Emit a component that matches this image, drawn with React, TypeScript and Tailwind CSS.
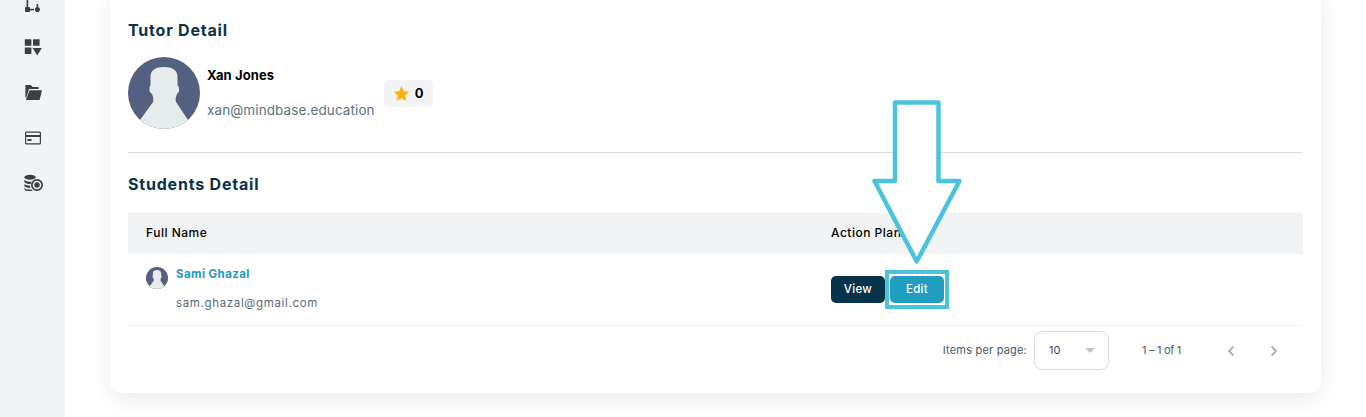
function Avatar({ size }: { size: string }) {
  return (
    <svg className={size} viewBox="0 0 72 72">
      <defs>
        <clipPath id="avatar-clip">
          <circle cx="36" cy="36" r="36" />
        </clipPath>
      </defs>
      <g clipPath="url(#avatar-clip)">
        <rect width="72" height="72" fill="#54607f" />
        <path
          d="M22.500 20c0-7 5-10 13.500-10s13.500 3 13.500 10v8l1.500 2.500v4l-2 2.500c-1 3-2 5-1 8l12 18 11 9H1l11-9 13-18c1-3 0-5-1-8l-2.500-2.500v-4l1-2.500z"
          fill="#e6ebeb"
        />
      </g>
    </svg>
  );
}

function SideIcon({ children }: { children: React.ReactNode }) {
  return (
    <div className="flex h-[45.3px] items-center justify-center">
      <svg className="h-5 w-5 text-[#3b3f44]" viewBox="0 0 20 20" fill="currentColor">
        {children}
      </svg>
    </div>
  );
}

function Sidebar() {
  return (
    <aside className="-mt-[21px] flex w-[65px] shrink-0 flex-col bg-[#f1f3f5]">
      <SideIcon>
        <rect x="3.600" y="0" width="1.600" height="17" />
        <rect x="2" y="15" width="5" height="5" rx="1" />
        <rect x="6" y="16.800" width="5" height="1.600" />
        <rect x="13.600" y="12" width="1.600" height="8" />
        <circle cx="14.400" cy="17.600" r="2.500" />
      </SideIcon>
      <SideIcon>
        <rect x="1.800" y="2.200" width="6.600" height="6.600" rx="0.600" />
        <rect x="10" y="2.200" width="6.600" height="6.600" rx="0.600" />
        <rect x="1.800" y="10.400" width="6.600" height="6.600" rx="0.600" />
        <path d="M9.600 11h9.200l-4.600 7.400z" />
      </SideIcon>
      <SideIcon>
        <path d="M2.400 3h5.400l1.700 2h6v2H6L3.400 15.500H2.400z" />
        <path d="M6.600 8.200h12.400L16.600 18H2.800z" />
      </SideIcon>
      <SideIcon>
        <path
          fillRule="evenodd"
          d="M3.500 3.500h13a1.500 1.500 0 0 1 1.500 1.500v10a1.500 1.500 0 0 1-1.500 1.500h-13A1.500 1.500 0 0 1 2 15V5a1.500 1.500 0 0 1 1.500-1.500zm0 1.200a.3.300 0 0 0-.3.300v2h13.600V5a.3.300 0 0 0-.3-.3zM3.200 9v6a.3.300 0 0 0 .3.300h13a.3.300 0 0 0 .3-.3V9z"
        />
        <rect x="4.500" y="11" width="4" height="2" />
      </SideIcon>
      <SideIcon>
        <ellipse cx="7" cy="4.300" rx="5.600" ry="2.500" />
        <path d="M1.400 6.800c1 1.300 3 2 5.600 2 .8 0 1.500-.1 2.200-.2A7 7 0 0 0 7.400 11H7c-2.400 0-4.500-.6-5.600-1.800z" />
        <path d="M1.400 11c1.100 1.100 3.200 1.700 5.600 1.700h.1c0 .8.200 1.500.5 2.200H7c-2.400 0-4.500-.6-5.600-1.700z" />
        <path d="M1.400 15c1.100 1.100 3.200 1.600 5.600 1.600h1.600l1 1.300c-.8.200-1.700.2-2.600.2-3 0-5.600-1-5.600-2.200z" />
        <path
          fillRule="evenodd"
          d="M14 6a6 6 0 1 1 0 12 6 6 0 0 1 0-12zm0 1.700a4.300 4.300 0 1 0 0 8.600 4.300 4.300 0 0 0 0-8.600z"
        />
        <circle cx="14" cy="12" r="2.700" />
      </SideIcon>
    </aside>
  );
}

function Pagination() {
  return (
    <div className="flex h-[49px] items-center justify-end pr-[17px] text-[11px] text-[#4c5a62]">
      <span className="tracking-[0.2px]">Items per page:</span>
      <div className="ml-[7px] flex h-[39px] w-[75px] items-center justify-between rounded-[8px] border border-[#dcdcdc] pl-[14px] pr-[13px] text-[#3f4d55]">
        <span>10</span>
        <span className="h-0 w-0 border-x-[5px] border-t-[5px] border-x-transparent border-t-[#c4c4c4]" />
      </div>
      <span className="ml-[33px] w-[40px] whitespace-nowrap tracking-[-0.3px]">1 – 1 of 1</span>
      <svg className="ml-[37px] h-6 w-6 text-[#b2b2b2]" viewBox="0 0 24 24" fill="none" stroke="currentColor" strokeWidth="2">
        <path d="M14.500 7.500 10 12l4.500 4.500" />
      </svg>
      <svg className="ml-[19px] h-6 w-6 text-[#b2b2b2]" viewBox="0 0 24 24" fill="none" stroke="currentColor" strokeWidth="2">
        <path d="M9.500 7.500 14 12l-4.500 4.500" />
      </svg>
    </div>
  );
}

export default function App() {
  return (
    <div className="relative flex h-[417px] w-[1366px] overflow-hidden bg-white font-['Inter','Liberation_Sans',sans-serif]">
      <Sidebar />
      <main className="min-w-0 flex-1 px-[45px]">
        <div className="-mt-[10px] h-[403px] rounded-b-[12px] bg-white px-[18px] pt-[28px] shadow-[0_6px_24px_rgba(0,0,0,0.08)]">
          <h2 className="text-[16px] leading-6 font-bold tracking-[0.8px] text-[#07334b]">Tutor Detail</h2>

          <div className="mt-[15px] flex items-center border-b border-[#dcdcdc] pb-[23px]">
            <Avatar size="h-[72px] w-[72px]" />
            <div className="ml-[7px] flex h-[72px] flex-col">
              <span className="mt-[10px] text-[13px] leading-4 font-bold tracking-[0.1px] text-black">Xan Jones</span>
              <span className="mt-[19px] text-[13.500px] leading-4 tracking-[0.1px] text-[#5a7380]">xan@mindbase.education</span>
            </div>
            <div className="ml-[9px] flex h-[27px] w-[49px] items-center justify-center gap-[5px] rounded-[5px] bg-[#f3f4f6]">
              <svg className="h-[17px] w-[17px] text-[#ffb300]" viewBox="0 0 24 24" fill="currentColor">
                <path d="M12 1.500l3.200 7.300 7.800.8-5.900 5.200 1.800 7.700L12 18.400l-6.900 4.100 1.800-7.700L1 9.600l7.800-.8z" />
              </svg>
              <span className="pt-px text-[13px] font-bold text-black">0</span>
            </div>
          </div>

          <h2 className="mt-[19px] text-[16px] leading-6 font-bold tracking-[0.8px] text-[#07334b]">Students Detail</h2>

          <div className="mt-[17px]">
            <div className="flex h-[41px] items-center bg-[#f1f3f5] pb-px text-[12px] font-medium tracking-[0.5px] text-black">
              <div className="w-[685px] pl-[18px]">Full Name</div>
              <div className="pl-[18px]">Action Plan</div>
            </div>
            <div className="flex h-[72px] border-b border-[#eeeeee]">
              <div className="flex w-[685px] pl-[18px]">
                <Avatar size="mt-[13px] h-[22px] w-[22px] shrink-0" />
                <div className="ml-[8px] flex flex-col">
                  <span className="mt-[12px] text-[11.500px] leading-4 font-bold tracking-[0.4px] text-[#2299bd]">Sami Ghazal</span>
                  <span className="mt-[13px] text-[11.500px] leading-4 tracking-[0.65px] text-[#5a6b75]">sam.ghazal@gmail.com</span>
                </div>
              </div>
              <div className="flex items-start gap-[5px] pl-[18px] pt-[22px]">
                <button className="h-[27px] w-[54px] rounded-[5px] bg-[#07334b] text-[11.500px] font-medium tracking-[0.3px] text-white">View</button>
                <button className="h-[27px] w-[54px] rounded-[5px] bg-[#219ebf] text-[11.500px] font-medium tracking-[0.3px] text-white">Edit</button>
              </div>
            </div>
            <Pagination />
          </div>
        </div>
      </main>

      {/* annotation drawn over the page */}
      <svg className="absolute left-[870px] top-[98px] h-[168px] w-[94px]" viewBox="870 98 94 168">
        <path
          d="M895 102.500H938.500V181H959.500L916.700 261.500 874.500 181H895Z"
          fill="white"
          stroke="#4cc3de"
          strokeWidth="4.500"
          strokeLinejoin="round"
        />
      </svg>
      <div className="absolute left-[885px] top-[270px] h-[39px] w-[64px] border-[4px] border-[#4cc3de]" />
    </div>
  );
}
